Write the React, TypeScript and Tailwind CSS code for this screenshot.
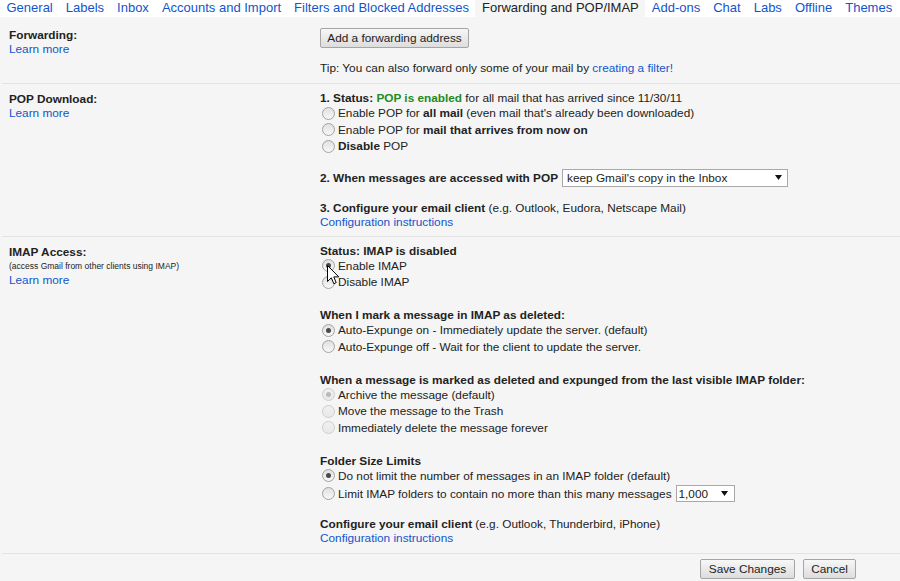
import React from "react";

function Radio({ checked = false, disabled = false }: { checked?: boolean; disabled?: boolean }) {
  return (
    <span
      className={
        disabled
          ? "relative inline-block w-[13px] h-[13px] shrink-0 rounded-full border border-[#cdcdcd] bg-gradient-to-b from-[#f0f0f0] to-[#e9e9e9]"
          : "relative inline-block w-[13px] h-[13px] shrink-0 rounded-full border border-[#a2a2a2] bg-gradient-to-b from-[#e0e0e0] to-[#f8f8f8]"
      }
    >
      {checked && (
        <span
          className={
            disabled
              ? "absolute left-[3px] top-[3px] w-[5px] h-[5px] rounded-full bg-[#b9b9b9]"
              : "absolute left-[3px] top-[3px] w-[5px] h-[5px] rounded-full bg-[#4a4a4a]"
          }
        />
      )}
    </span>
  );
}

function RadioRow({
  children,
  checked,
  disabled,
  tall,
}: {
  children: React.ReactNode;
  checked?: boolean;
  disabled?: boolean;
  tall?: boolean;
}) {
  return (
    <div className={tall ? "flex items-center h-[19px] pl-[2px]" : "flex items-center h-[16.5px] pl-[2px]"}>
      <Radio checked={checked} disabled={disabled} />
      <span className="ml-[3px] leading-[14px] whitespace-nowrap flex items-center">{children}</span>
    </div>
  );
}

function Arrow() {
  return (
    <svg width="7" height="5" viewBox="0 0 7 5" className="shrink-0">
      <polygon points="0,0 7,0 3.5,5" fill="#111" />
    </svg>
  );
}

function Link({ children }: { children: React.ReactNode }) {
  return <span className="text-[#1155cc]">{children}</span>;
}

function Btn({ children, w }: { children: React.ReactNode; w: string }) {
  return (
    <button
      className={`${w} h-[20px] border border-[#a5a5a5] rounded-[2px] bg-gradient-to-b from-[#f7f7f7] to-[#dddddd] text-[11.8px] leading-[18px] text-[#222] text-center`}
    >
      {children}
    </button>
  );
}

const tabs = [
  "General",
  "Labels",
  "Inbox",
  "Accounts and Import",
  "Filters and Blocked Addresses",
  "Forwarding and POP/IMAP",
  "Add-ons",
  "Chat",
  "Labs",
  "Offline",
  "Themes",
];

export default function App() {
  return (
    <div className="relative w-[900px] h-[581px] overflow-hidden bg-[#f5f5f5] text-[11.8px] text-[#222] font-['Liberation_Sans',Arial,sans-serif]">
      {/* Tabs */}
      <div className="flex h-[17px] bg-white text-[13px] leading-[16px] whitespace-nowrap">
        {tabs.map((t) =>
          t === "Forwarding and POP/IMAP" ? (
            <div key={t} className="px-[6.5px] bg-[#f5f5f5] text-[#222]">
              {t}
            </div>
          ) : (
            <div key={t} className="px-[6.5px] text-[#1155cc]">
              {t}
            </div>
          )
        )}
      </div>

      <div className="ml-[2px]">
        {/* Forwarding */}
        <div className="flex border-b border-[#e3e3e3] pb-[8px]">
          <div className="w-[318px] pl-[7px] pt-[11px] leading-[14px]">
            <div className="font-bold">Forwarding:</div>
            <div>
              <Link>Learn more</Link>
            </div>
          </div>
          <div className="flex-1 pt-[11px]">
            <Btn w="w-[149px]">Add a forwarding address</Btn>
            <div className="mt-[13px] leading-[14px]">
              Tip: You can also forward only some of your mail by <Link>creating a filter!</Link>
            </div>
          </div>
        </div>

        {/* POP */}
        <div className="flex border-b border-[#e3e3e3] pb-[7px]">
          <div className="w-[318px] pl-[7px] pt-[8px] leading-[14px]">
            <div className="font-bold">POP Download:</div>
            <div>
              <Link>Learn more</Link>
            </div>
          </div>
          <div className="flex-1 pt-[8px]">
            <div className="leading-[13px] h-[13px]">
              <b>1. Status:</b> <b className="text-[#228b22]">POP is enabled</b> for all mail that has arrived since
              11/30/11
            </div>
            <RadioRow>
              Enable POP for&nbsp;<b>all mail</b>&nbsp;(even mail that's already been downloaded)
            </RadioRow>
            <RadioRow>
              Enable POP for&nbsp;<b>mail that arrives from now on</b>
            </RadioRow>
            <RadioRow>
              <b>Disable</b>&nbsp;POP
            </RadioRow>
            <div className="mt-[14px] h-[18px] flex items-center">
              <b className="leading-[14px]">2. When messages are accessed with POP</b>
              <div className="ml-[4px] w-[226px] h-[18px] bg-white border border-[#a9a9a9] flex items-center justify-between pl-[4px] pr-[5px] leading-[14px]">
                <span>keep Gmail's copy in the Inbox</span>
                <Arrow />
              </div>
            </div>
            <div className="mt-[14px] leading-[14px]">
              <b>3. Configure your email client</b> (e.g. Outlook, Eudora, Netscape Mail)
            </div>
            <div className="leading-[14px]">
              <Link>Configuration instructions</Link>
            </div>
          </div>
        </div>

        {/* IMAP */}
        <div className="flex border-b border-[#e3e3e3] pb-[8px]">
          <div className="w-[318px] pl-[7px] pt-[8px] leading-[14px]">
            <div className="font-bold">IMAP Access:</div>
            <div className="text-[8.5px] leading-[14px]">(access Gmail from other clients using IMAP)</div>
            <div>
              <Link>Learn more</Link>
            </div>
          </div>
          <div className="flex-1 pt-[8px]">
            <div className="leading-[13px] h-[13px] font-bold">Status: IMAP is disabled</div>
            <RadioRow checked>Enable IMAP</RadioRow>
            <RadioRow>Disable IMAP</RadioRow>

            <div className="mt-[18.5px] leading-[13px] h-[13px] font-bold">When I mark a message in IMAP as deleted:</div>
            <RadioRow checked>Auto-Expunge on - Immediately update the server. (default)</RadioRow>
            <RadioRow>Auto-Expunge off - Wait for the client to update the server.</RadioRow>

            <div className="mt-[18.5px] leading-[13px] h-[13px] font-bold">
              When a message is marked as deleted and expunged from the last visible IMAP folder:
            </div>
            <RadioRow checked disabled>
              Archive the message (default)
            </RadioRow>
            <RadioRow disabled>Move the message to the Trash</RadioRow>
            <RadioRow disabled>Immediately delete the message forever</RadioRow>

            <div className="mt-[18.5px] leading-[13px] h-[13px] font-bold">Folder Size Limits</div>
            <RadioRow checked>Do not limit the number of messages in an IMAP folder (default)</RadioRow>
            <RadioRow tall>
              Limit IMAP folders to contain no more than this many messages
              <span className="ml-[4px] w-[59px] h-[17px] bg-white border border-[#a9a9a9] flex items-center justify-between pl-[2px] pr-[6px]">
                <span>1,000</span>
                <Arrow />
              </span>
            </RadioRow>

            <div className="mt-[14px] leading-[14px]">
              <b>Configure your email client</b> (e.g. Outlook, Thunderbird, iPhone)
            </div>
            <div className="leading-[14px]">
              <Link>Configuration instructions</Link>
            </div>
          </div>
        </div>

        {/* Buttons */}
        <div className="flex justify-end gap-[8px] pt-[5px] pr-[44px]">
          <Btn w="w-[95px]">Save Changes</Btn>
          <Btn w="w-[53px]">Cancel</Btn>
        </div>
      </div>

      {/* Mouse cursor */}
      <svg
        className="absolute left-[327px] top-[265px]"
        width="13"
        height="21"
        viewBox="0 0 13 21"
      >
        <path
          d="M0.5 0.5 L0.5 16.5 L4.3 12.8 L6.8 18.7 L9.2 17.7 L6.8 11.9 L11.8 11.9 Z"
          fill="#fff"
          stroke="#000"
          strokeWidth="1"
          strokeLinejoin="miter"
        />
      </svg>
    </div>
  );
}
